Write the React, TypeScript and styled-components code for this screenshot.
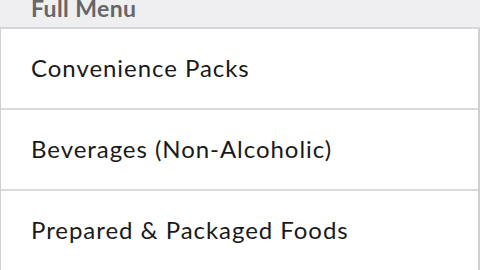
import styled, { createGlobalStyle } from 'styled-components';

const Global = createGlobalStyle`
  html, body {
    margin: 0;
    padding: 0;
    background: #fff;
    overflow: hidden;
  }
`;

const Page = styled.div`
  width: 480px;
  height: 270px;
  font-family: Lato, 'Liberation Sans', sans-serif;
  background: #fff;
`;

const SectionHeader = styled.div`
  height: 27px;
  background: #efeff1;
  border-bottom: 2px solid #d6d6d8;
  padding-left: 31px;
  overflow: hidden;
`;

const HeaderTitle = styled.div`
  margin-top: -3px;
  color: #666668;
  font-size: 23px;
  font-weight: 700;
  line-height: 1;
  letter-spacing: 0.4px;
`;

const List = styled.div`
  border-left: 1px solid #d0d0d0;
  border-right: 2px solid #d0d0d0;
`;

const Row = styled.div`
  height: 81px;
  box-sizing: border-box;
  padding: 0 0 3px 30px;
  border-bottom: 2px solid #dadada;
  display: flex;
  align-items: center;
  font-size: 24px;
  color: #1a1a1a;
  letter-spacing: 0.95px;
`;

const items = ['Convenience Packs', 'Beverages (Non-Alcoholic)', 'Prepared & Packaged Foods'];

function App() {
  return (
    <Page>
      <Global />
      <SectionHeader>
        <HeaderTitle>Full Menu</HeaderTitle>
      </SectionHeader>
      <List>
        {items.map((name) => (
          <Row key={name}>{name}</Row>
        ))}
      </List>
    </Page>
  );
}

export default App;
